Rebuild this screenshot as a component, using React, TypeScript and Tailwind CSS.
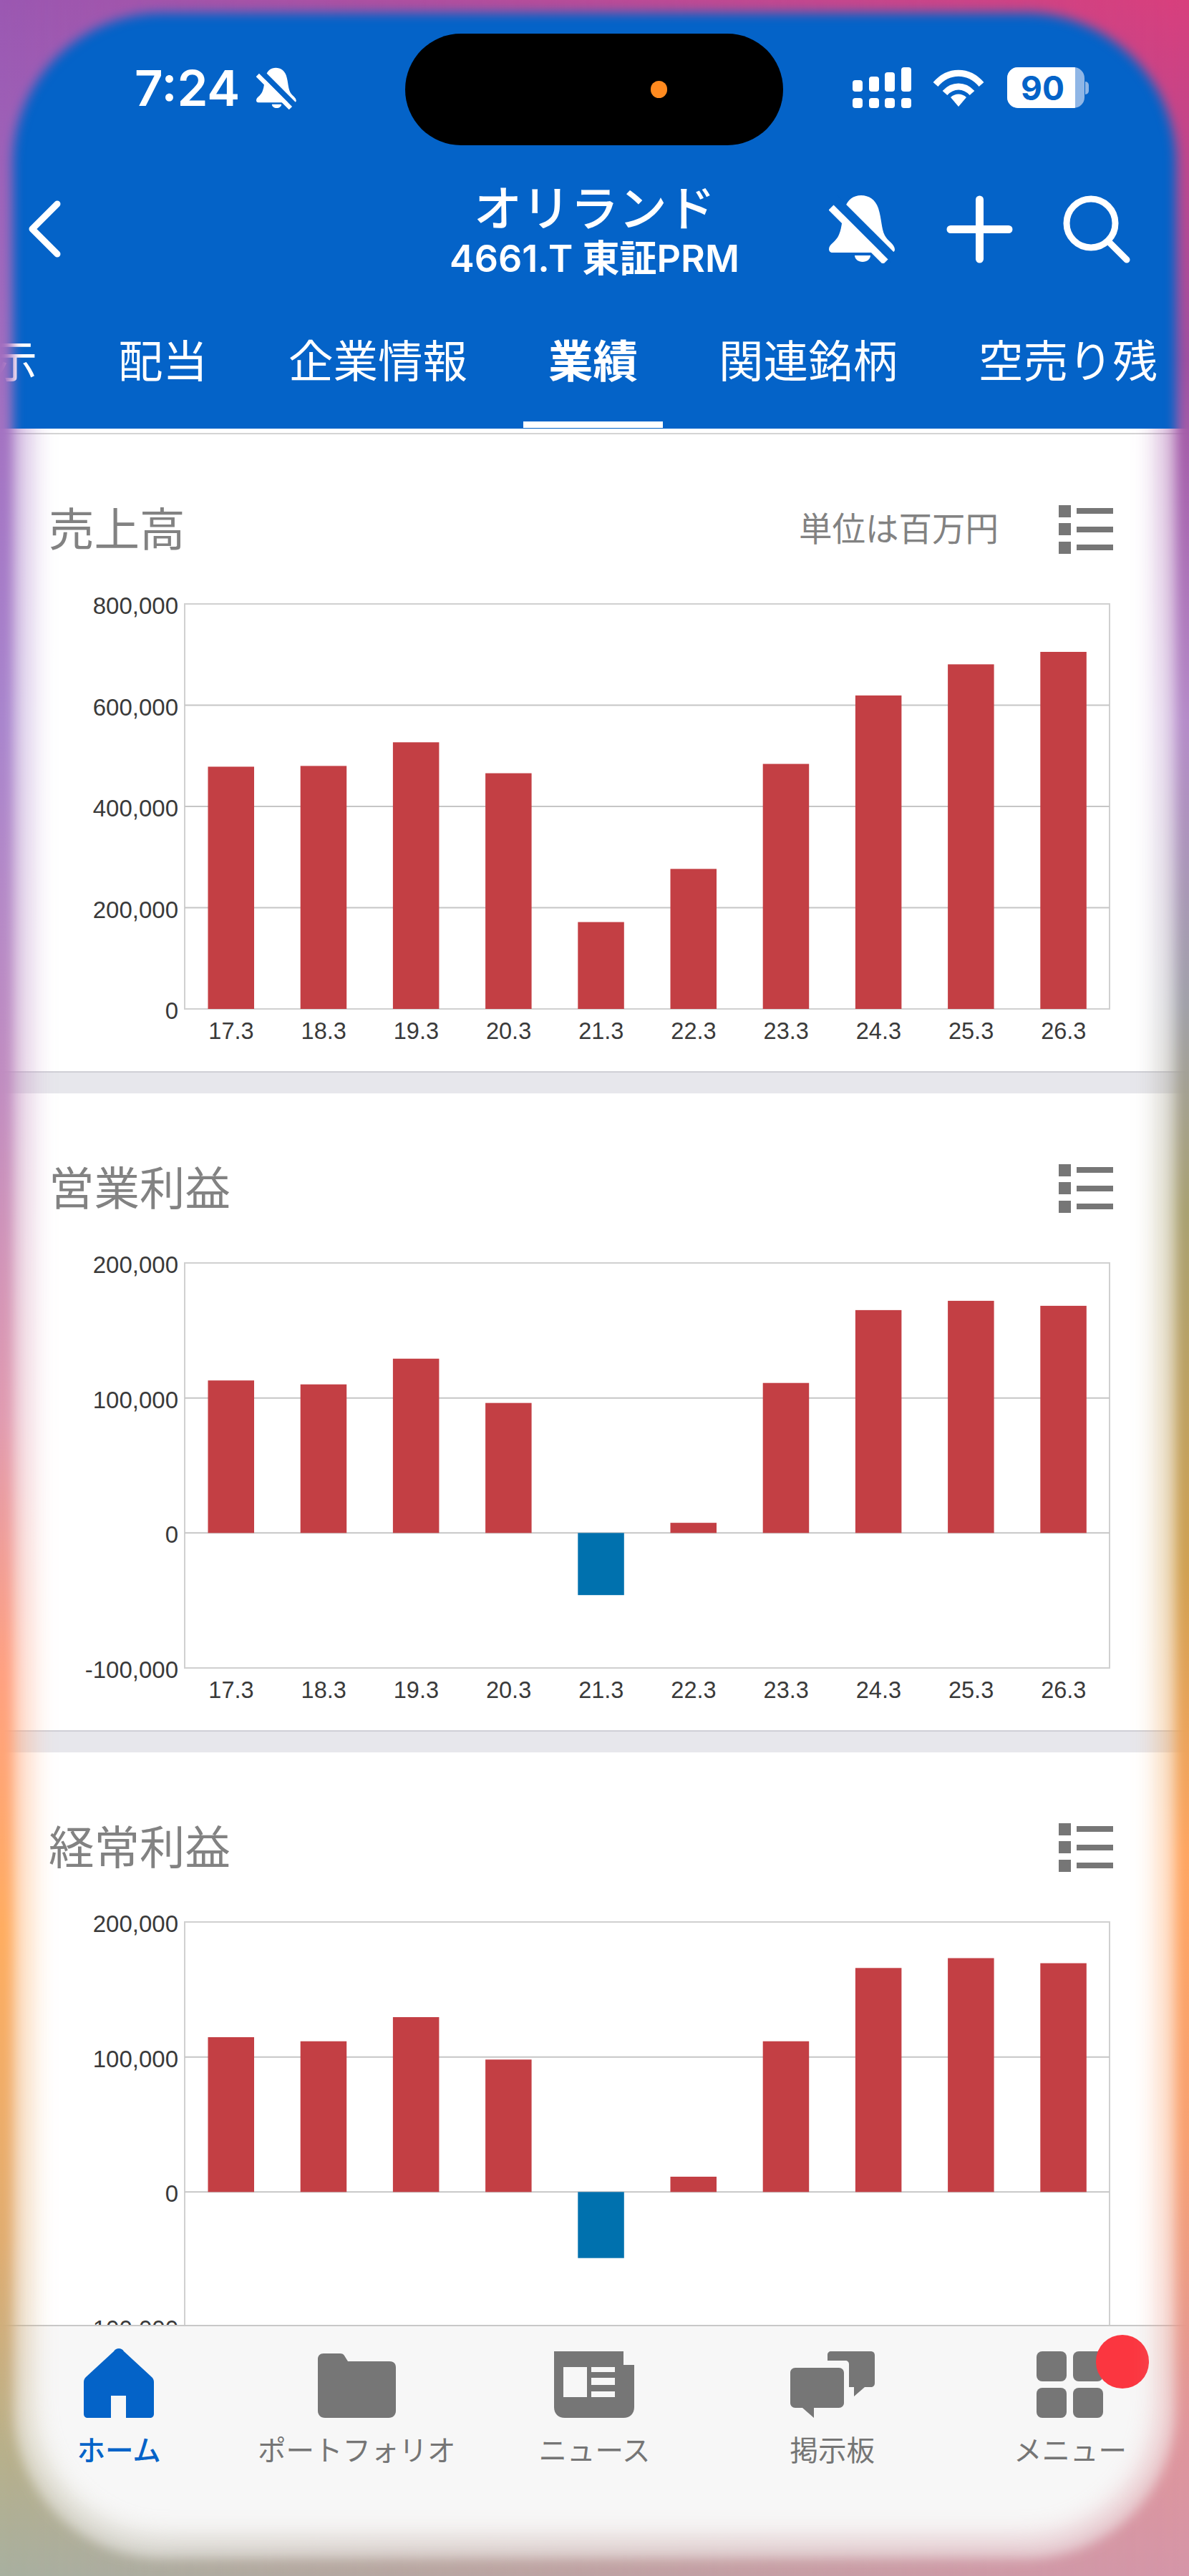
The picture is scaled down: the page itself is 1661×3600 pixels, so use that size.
import React from 'react';

const years = ['17.3', '18.3', '19.3', '20.3', '21.3', '22.3', '23.3', '24.3', '25.3', '26.3'];
const tabs = ['表示', '配当', '企業情報', '業績', '関連銘柄', '空売り残'];

const PLOT_LEFT = 258;
const PLOT_RIGHT = 1550;
const PLOT_HEIGHT = 566;

interface ChartProps {
    min: number;
    max: number;
    ticks: number[];
    values: number[];
}

const Chart: React.FC<ChartProps> = ({ min, max, ticks, values }) => {
    const toY = (v: number) => ((max - v) / (max - min)) * PLOT_HEIGHT;
    const zero = toY(0);
    return (
        <svg width="1661" height="653" className="block overflow-visible font-['Liberation_Sans',sans-serif]">
            <rect x={PLOT_LEFT} y="0" width={PLOT_RIGHT - PLOT_LEFT} height={PLOT_HEIGHT} fill="#fff" stroke="#d0d0d0" strokeWidth="2" />
            {ticks.map((t) => (
                <g key={t}>
                    {t !== min && t !== max && <line x1={PLOT_LEFT} x2={PLOT_RIGHT} y1={toY(t)} y2={toY(t)} stroke="#c6c6c6" strokeWidth="2" />}
                    <text x="249" y={toY(t) + 14} textAnchor="end" fontSize="33" fill="#3a3a3a">
                        {t.toLocaleString('en-US')}
                    </text>
                </g>
            ))}
            {values.map((v, i) => {
                const x = 290.5 + i * 129.2;
                return (
                    <rect
                        key={years[i]}
                        x={x}
                        y={v >= 0 ? toY(v) : zero}
                        width="64.5"
                        height={Math.abs(toY(v) - zero)}
                        fill={v >= 0 ? '#c33f44' : '#0071ae'}
                    />
                );
            })}
            {years.map((y, i) => (
                <text key={y} x={323 + i * 129.2} y="608" textAnchor="middle" fontSize="32.5" fill="#3a3a3a">
                    {y}
                </text>
            ))}
        </svg>
    );
};

const ListIcon = () => (
    <svg width="76" height="68" viewBox="0 0 76 68" fill="#767676">
        <rect x="0" y="0" width="17" height="17" />
        <rect x="0" y="25" width="17" height="17" />
        <rect x="0" y="51" width="17" height="17" />
        <rect x="25" y="4" width="51" height="8" />
        <rect x="25" y="30" width="51" height="8" />
        <rect x="25" y="55" width="51" height="8" />
    </svg>
);

interface SectionProps {
    title: string;
    unit?: string;
    children: React.ReactNode;
}

const Section: React.FC<SectionProps> = ({ title, unit, children }) => (
    <section className="bg-white">
        <div className="h-[237px] pt-[88px] pl-[68px] pr-[106px]">
            <div className="flex h-[90px] items-center justify-between">
                <h2 className="text-[63.5px] leading-none font-normal text-[#828282] -mt-[8px]">{title}</h2>
                <div className="flex items-center gap-[84px]">
                    {unit && <span className="text-[46.5px] leading-none text-[#828282] -mt-[8px]">{unit}</span>}
                    <ListIcon />
                </div>
            </div>
        </div>
        {children}
    </section>
);

const BellOff: React.FC<{ className?: string }> = ({ className }) => (
    <svg viewBox="0 0 94 95" className={className}>
        <path
            d="M45 0C56 0 65 6 69 18C74 34 73 46 78 56C82 64 92 68 92 76C92 78 90 80 87 80H5C2 80 0 78 0 75C0 68 10 65 14 55C19 44 18 30 22 18C26 6 34 0 45 0z"
            fill="#fff"
        />
        <path d="M36 84h22c0 5-5 9-11 9s-11-4-11-9z" fill="#fff" />
        <line x1="-4" y1="-6" x2="100" y2="98" stroke="#0463c8" strokeWidth="13" />
        <line x1="3" y1="17" x2="79" y2="93" stroke="#fff" strokeWidth="10" />
    </svg>
);

const HomeIcon = () => (
    <svg width="98" height="97" viewBox="0 0 98 97" fill="#0463c8">
        <path d="M49 0c3 0 5 1 7 4l39 36c2 2 3 4 3 7v44c0 4-2 6-6 6H59V66H38v31H6c-4 0-6-2-6-6V47c0-3 1-5 3-7L42 4c2-3 4-4 7-4z" />
    </svg>
);

const FolderIcon = () => (
    <svg width="109" height="90" viewBox="0 0 109 90" fill="#767676">
        <path d="M8 0h23c3 0 5 1 6 3l5 8h58c6 0 9 3 9 9v60c0 6-4 10-10 10H10C4 90 0 86 0 80V8c0-5 3-8 8-8z" />
    </svg>
);

const NewsIcon = () => (
    <svg width="112" height="93" viewBox="0 0 112 93" fill="#767676">
        <path
            fillRule="evenodd"
            d="M0 0h97v19h15v59c0 9-6 15-15 15H15C6 93 0 87 0 78zM13 22v42h33V22zM52 22v7h33v-7zM52 37v10h33V37zM52 56v8h33v-8z"
        />
    </svg>
);

const BoardIcon = () => (
    <svg width="118" height="93" viewBox="0 0 118 93" fill="#767676">
        <path d="M52 5c0-3 2-5 5-5h55c4 0 6 2 6 6v38c0 4-2 6-6 6h-8L89 63V50h-7V18c0-3-2-5-5-5H52z" />
        <path d="M7 23h61c4 0 7 3 7 7v42c0 4-3 7-7 7H33v14L17 79H7c-4 0-7-3-7-7V30c0-4 3-7 7-7z" />
    </svg>
);

const MenuIcon = () => (
    <svg width="93" height="93" viewBox="0 0 93 93" fill="#767676">
        <rect x="0" y="0" width="42" height="42" rx="8" />
        <rect x="51" y="0" width="42" height="42" rx="8" />
        <rect x="0" y="51" width="42" height="42" rx="8" />
        <rect x="51" y="51" width="42" height="42" rx="8" />
    </svg>
);

const navItems = [
    { label: 'ホーム', icon: <HomeIcon />, active: true },
    { label: 'ポートフォリオ', icon: <FolderIcon /> },
    { label: 'ニュース', icon: <NewsIcon /> },
    { label: '掲示板', icon: <BoardIcon /> },
    { label: 'メニュー', icon: <MenuIcon /> },
];

// wallpaper showing round the screen, with the soft edge of the screenshot frame
const Wallpaper = () => (
    <svg width="1661" height="3600" className="absolute inset-0 z-50 pointer-events-none">
        <defs>
            <linearGradient id="wall-left" x1="0" y1="0" x2="0" y2="1">
                <stop offset="0" stopColor="#9b58b2" />
                <stop offset="0.28" stopColor="#a884cc" />
                <stop offset="0.42" stopColor="#c08cc0" />
                <stop offset="0.55" stopColor="#e09ab0" />
                <stop offset="0.65" stopColor="#ffa080" />
                <stop offset="0.75" stopColor="#ffac60" />
                <stop offset="0.87" stopColor="#e0ac70" />
                <stop offset="0.95" stopColor="#b8b08a" />
                <stop offset="1" stopColor="#a8b0a0" />
            </linearGradient>
            <linearGradient id="wall-right" x1="0" y1="0" x2="0" y2="1">
                <stop offset="0" stopColor="#d83f7c" />
                <stop offset="0.14" stopColor="#a050a0" />
                <stop offset="0.28" stopColor="#b48ac8" />
                <stop offset="0.39" stopColor="#a0a0a8" />
                <stop offset="0.47" stopColor="#a8a070" />
                <stop offset="0.61" stopColor="#d0a050" />
                <stop offset="0.72" stopColor="#ffa560" />
                <stop offset="0.83" stopColor="#f8a070" />
                <stop offset="0.94" stopColor="#e0959a" />
                <stop offset="1" stopColor="#d595a8" />
            </linearGradient>
            <linearGradient id="wall-mix">
                <stop offset="0" stopColor="#000" />
                <stop offset="1" stopColor="#fff" />
            </linearGradient>
            <mask id="mix-mask" maskUnits="userSpaceOnUse" x="0" y="0" width="1661" height="3600">
                <rect width="1661" height="3600" fill="url(#wall-mix)" />
            </mask>
            <filter id="blur-hard" x="-5%" y="-5%" width="110%" height="110%">
                <feGaussianBlur stdDeviation="8" />
            </filter>
            <filter id="blur-soft" x="-5%" y="-5%" width="110%" height="110%">
                <feGaussianBlur stdDeviation="18" />
            </filter>
            <mask id="edge-mask" maskUnits="userSpaceOnUse" x="0" y="0" width="1661" height="3600">
                <rect width="1661" height="3600" fill="#fff" />
                <rect x="18" y="18" width="1625" height="3558" rx="210" fill="#000" filter="url(#blur-hard)" />
            </mask>
            <mask id="soft-mask" maskUnits="userSpaceOnUse" x="0" y="0" width="1661" height="3600">
                <rect y="599" width="1661" height="3001" fill="#fff" />
                <rect x="42" y="100" width="1577" height="3448" rx="190" fill="#000" filter="url(#blur-soft)" />
            </mask>
            <g id="wall">
                <rect width="1661" height="3600" fill="url(#wall-left)" />
                <rect width="1661" height="3600" fill="url(#wall-right)" mask="url(#mix-mask)" />
            </g>
        </defs>
        <use href="#wall" mask="url(#soft-mask)" opacity="0.5" />
        <use href="#wall" mask="url(#edge-mask)" />
    </svg>
);

const Header = () => (
    <header className="bg-[#0463c8] h-[599px] shrink-0 text-white overflow-hidden">
        <div className="flex items-start pt-[47px] h-[203px]">
            <div className="w-[566px] pl-[188px] pt-[47px] flex items-center gap-[23px] h-[105px]">
                <span className="font-['Inter',sans-serif] font-semibold text-[69px] leading-[58px]">7:24</span>
                <BellOff className="w-[57px] h-[59px]" />
            </div>
            <div className="w-[528px] h-[156px] rounded-full bg-black flex items-center pl-[343px]">
                <div className="w-[23px] h-[24px] rounded-full bg-[#ff8a1f]" />
            </div>
            <div className="pl-[97px] pt-[47px] flex items-center">
                <svg width="82" height="57" viewBox="0 0 82 57" fill="#fff">
                    <rect x="0" y="18" width="14" height="16" rx="4" />
                    <rect x="23" y="13" width="14" height="21" rx="4" />
                    <rect x="45" y="7" width="14" height="27" rx="4" />
                    <rect x="68" y="0" width="14" height="34" rx="4" />
                    <rect x="0" y="43" width="14" height="14" rx="4" />
                    <rect x="23" y="43" width="14" height="14" rx="4" />
                    <rect x="45" y="43" width="14" height="14" rx="4" />
                    <rect x="68" y="43" width="14" height="14" rx="4" />
                </svg>
                <svg width="72" height="52" viewBox="0 0 72 52" fill="none" stroke="#fff" strokeWidth="9" className="ml-[30px]">
                    <path d="M4 21C22 0 50 0 68 21" />
                    <path d="M17 33C28 21 44 21 55 33" />
                    <path d="M36 52L25 39C31 33 41 33 47 39Z" fill="#fff" stroke="none" />
                </svg>
                <div className="ml-[32px] flex items-center">
                    <div className="w-[108px] h-[57px] rounded-[15px] bg-[#8fb6e6] overflow-hidden">
                        <div className="w-[95px] h-[57px] bg-white flex items-center justify-center pl-[4px] font-['Inter',sans-serif] font-bold text-[46px] leading-none text-[#0463c8]">
                            90
                        </div>
                    </div>
                    <div className="ml-[1px] w-[5px] h-[18px] rounded-r-full bg-[#8fb6e6]" />
                </div>
            </div>
        </div>
        <div className="grid grid-cols-[520px_1fr_520px] items-center h-[234px]">
            <div className="pl-[40px]">
                <svg width="45" height="80" viewBox="0 0 45 80" fill="none" stroke="#fff" strokeWidth="9" strokeLinecap="round" strokeLinejoin="round">
                    <path d="M40 5L5 40L40 75" />
                </svg>
            </div>
            <div className="text-center whitespace-nowrap">
                <div className="text-[67.5px] leading-[84px] font-medium">オリランド</div>
                <div className="text-[52px] leading-[66px] font-semibold font-['Inter','Noto_Sans_CJK_JP',sans-serif]">4661.T 東証PRM</div>
            </div>
            <div className="pl-[17px] flex items-center gap-[70px]">
                <BellOff className="w-[94px] h-[95px]" />
                <svg width="93" height="95" viewBox="0 0 93 95" fill="none" stroke="#fff" strokeWidth="11" strokeLinecap="round">
                    <path d="M46.5 6V89M6 47.5H87" />
                </svg>
                <svg width="94" height="95" viewBox="0 0 94 95" fill="none" stroke="#fff" strokeWidth="9" strokeLinecap="round">
                    <circle cx="39" cy="39" r="34" />
                    <path d="M63 64L89 90" />
                </svg>
            </div>
        </div>
        <nav className="flex gap-[113px] h-[162px] -ml-[73px]">
            {tabs.map((t) => (
                <div key={t} className={`relative h-full shrink-0 flex items-center pb-[33px] text-[62.5px] leading-none ${t === '業績' ? 'font-bold' : ''}`}>
                    {t}
                    {t === '業績' && <div className="absolute -left-[35px] -right-[35px] bottom-[1px] h-[9px] bg-white" />}
                </div>
            ))}
        </nav>
    </header>
);

export default function App() {
    return (
        <div className="relative w-[1661px] h-[3600px] overflow-hidden flex flex-col bg-white font-['Noto_Sans_CJK_JP',sans-serif]">
            <Header />
            <main className="flex-1 min-h-0 overflow-hidden">
                <div className="h-[8px] border-b-2 border-[#d4d4d4]" />
                <Section title="売上高" unit="単位は百万円">
                    <Chart
                        min={0}
                        max={800000}
                        ticks={[0, 200000, 400000, 600000, 800000]}
                        values={[478500, 480000, 526700, 465600, 171600, 276600, 484000, 619200, 680700, 705300]}
                    />
                </Section>
                <div className="h-[31px] border-t-2 border-[#cfcfd6] bg-[#e7e7ec]" />
                <Section title="営業利益">
                    <Chart
                        min={-100000}
                        max={200000}
                        ticks={[-100000, 0, 100000, 200000]}
                        values={[112963, 110053, 129100, 96296, -46032, 7513, 111111, 165079, 171958, 168254]}
                    />
                </Section>
                <div className="h-[31px] border-t-2 border-[#cfcfd6] bg-[#e7e7ec]" />
                <Section title="経常利益">
                    <Chart
                        min={-100000}
                        max={200000}
                        ticks={[-100000, 0, 100000, 200000]}
                        values={[114656, 111640, 129524, 98095, -48942, 11323, 111640, 165926, 173228, 169471]}
                    />
                </Section>
            </main>
            <footer className="relative z-10 h-[351px] shrink-0 border-t-2 border-[#c8c8c8] bg-[#f7f7f7] pt-[31px] grid grid-cols-5 items-start">
                {navItems.map((item) => (
                    <div key={item.label} className="flex flex-col items-center">
                        <div className="h-[97px] flex items-end">{item.icon}</div>
                        <div className={`mt-[20px] text-[39.5px] leading-[46px] whitespace-nowrap ${item.active ? 'text-[#0463c8] font-medium' : 'text-[#757575]'}`}>
                            {item.label}
                        </div>
                    </div>
                ))}
                <div className="absolute left-[1531px] top-[12px] w-[74px] h-[75px] rounded-full bg-[#fb3640]" />
            </footer>
            <Wallpaper />
        </div>
    );
}
